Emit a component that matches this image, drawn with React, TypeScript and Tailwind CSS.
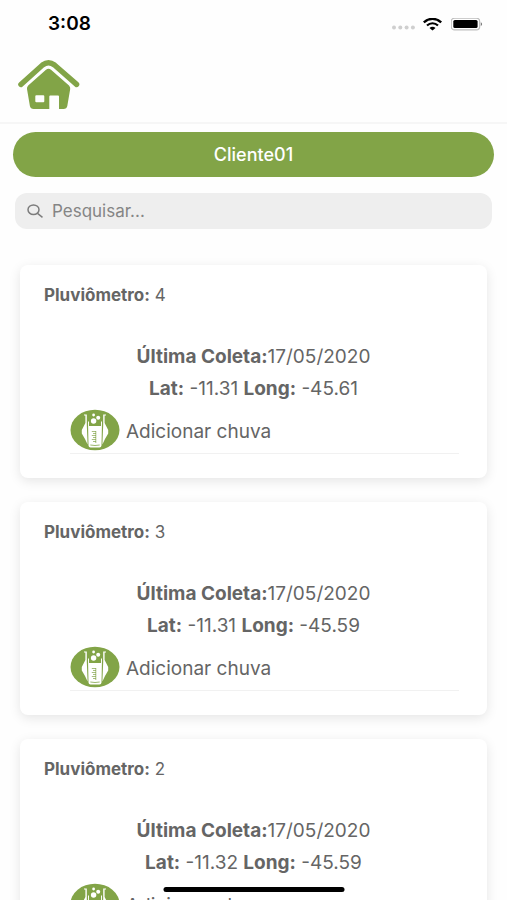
export interface Gauge {
  id: number;
  lastReading: string;
  lat: string;
  long: string;
}

const gauges: Gauge[] = [
  { id: 4, lastReading: '17/05/2020', lat: '-11.31', long: '-45.61' },
  { id: 3, lastReading: '17/05/2020', lat: '-11.31', long: '-45.59' },
  { id: 2, lastReading: '17/05/2020', lat: '-11.32', long: '-45.59' },
];

function StatusBar() {
  return (
    <div className="flex h-12 shrink-0 items-center justify-between pr-6 pl-12">
      <span className="text-[19px] font-semibold text-black">3:08</span>
      <div className="flex items-center gap-2">
        <svg width="23" height="6" viewBox="0 0 23 6" className="mt-2" fill="#cfcfcf">
          <circle cx="2" cy="2.5" r="2" />
          <circle cx="8.3" cy="2.5" r="2" />
          <circle cx="14.6" cy="2.5" r="2" />
          <circle cx="20.9" cy="2.5" r="2" />
        </svg>
        <svg width="20" height="13" viewBox="0 0 20 13" fill="none" stroke="#000">
          <path d="M.8 4.4C6 -.3 13 -.3 18.200 4.400" strokeWidth="2.4" />
          <path d="M4 7.500C7.200 4.500 11.800 4.500 15 7.500" strokeWidth="2.2" />
          <path d="M6.500 10C8.200 8.400 10.800 8.400 12.500 10L9.500 12.400Z" fill="#000" stroke="none" />
        </svg>
        <svg width="32" height="13" viewBox="0 0 32 13">
          <rect x=".2" y=".2" width="28.500" height="11.6" rx="3.4" fill="#fff" stroke="#bdbdbd" strokeWidth="1.2" />
          <rect x="2.3" y="1.9" width="24.300" height="8.2" rx="1.6" fill="#000" />
          <path d="M29.800 4.2C31.500 4.800 31.500 7.400 29.800 8Z" fill="#777" />
        </svg>
      </div>
    </div>
  );
}

function HomeIcon() {
  return (
    <svg width="62" height="50" viewBox="0 0 62 50" fill="#82a447">
      <path
        d="M2.9 24.4L24.500 5Q30.500 .6 36.500 5L58.600 24.400"
        fill="none"
        stroke="#82a447"
        strokeWidth="5.400"
        strokeLinecap="round"
      />
      <path
        fillRule="evenodd"
        d="M28 9.800Q30.500 7.800 33 9.800L51 25.500Q52.500 27 52.200 29L49.300 46Q48.700 49 45.500 49H41V36.500Q41 35.500 40 35.500H32.300Q31.300 35.500 31.300 36.500V49H15.700Q12.500 49 11.900 46L9 29Q8.700 27 10.200 25.500ZM18.300 35.200Q17.300 35.200 17.300 36.200V41.300Q17.300 42.300 18.300 42.300H25.300Q26.300 42.300 26.300 41.300V36.200Q26.300 35.200 25.300 35.200Z"
      />
    </svg>
  );
}

function RainIcon() {
  return (
    <svg width="50" height="42" viewBox="0 0 50 42" className="shrink-0">
      <ellipse cx="25" cy="21" rx="24.500" ry="20.300" fill="#82a447" />
      <g fill="#fff">
        <path d="M14 5.400H16.800V16L17.600 35.500L15 30L11.800 24.500V21L15.400 14V6.500H14Z" />
        <path d="M36 5.400H33.200V16L32.400 35.500L35 30L38.200 24.500V21L34.600 14V6.500H36Z" />
        <path d="M18 12.500H19V17H31V12.500H32L31.500 36.500Q31.400 38.600 29.400 38.600H20.600Q18.600 38.600 18.500 36.500Z" />
        <circle cx="23.600" cy="12" r="2.700" />
        <circle cx="28.200" cy="8.800" r="2" />
        <circle cx="23.600" cy="6" r="1.400" />
      </g>
      <path d="M20.300 36Q25 37 29.700 36" fill="none" stroke="#82a447" strokeWidth=".8" />
      <path
        d="M25.800 22V34M21.800 22.500H26M23 24.500H26M21.800 26.500H26M23 28.500H26M21.800 30.500H26M23 32.500H26"
        fill="none"
        stroke="#82a447"
        strokeWidth=".7"
      />
    </svg>
  );
}

function GaugeCard({ ...gauge }: Gauge) {
  return (
    <div className="rounded-lg bg-white px-6 pt-4 pb-6 shadow-[0_3px_12px_rgba(0,0,0,0.1)]">
      <p className="pt-1 text-[17px] leading-5">
        <b className="font-bold">Pluviômetro:</b> {gauge.id}
      </p>
      <div className="mt-9 text-center text-[19px] leading-8">
        <p>
          <b className="font-bold">Última Coleta:</b>
          {gauge.lastReading}
        </p>
        <p>
          <b className="font-bold">Lat:</b> {gauge.lat} <b className="font-bold">Long:</b> {gauge.long}
        </p>
      </div>
      <div className="mt-1 mr-1 ml-[26px] border-b border-[#f1f1f1]">
        <button className="flex w-full items-center gap-1.5 pb-0.5 text-left text-[19px] leading-6">
          <RainIcon />
          <span className="pt-1">Adicionar chuva</span>
        </button>
      </div>
    </div>
  );
}

export default function App() {
  return (
    <div className="relative flex h-screen flex-col overflow-hidden bg-[#fefefe] font-[Inter,sans-serif] text-[#656565]">
      <StatusBar />
      <header className="shrink-0 border-b-2 border-[#f6f6f6] px-[18px] pt-3 pb-3">
        <a href="#" aria-label="Home" className="inline-block align-top">
          <HomeIcon />
        </a>
      </header>
      <main>
        <div className="px-[13px] pt-2">
          <button className="h-[45px] w-full rounded-full bg-[#82a447] text-lg font-medium text-white">
            Cliente01
          </button>
        </div>
        <div className="px-[15px] pt-4">
          <label className="flex h-9 items-center gap-2 rounded-xl bg-[#eeeeee] px-3">
            <svg width="17" height="14" viewBox="0 0 17 14" fill="none" stroke="#7c7c7c" strokeWidth="1.500">
              <ellipse cx="6.500" cy="5.700" rx="5.500" ry="4.800" />
              <path d="M10.500 9.300L15.500 13.300" />
            </svg>
            <input
              type="search"
              aria-label="Pesquisar"
              placeholder="Pesquisar..."
              className="h-9 min-w-0 flex-1 bg-transparent text-[17px] outline-none placeholder:text-[#858585]"
            />
          </label>
        </div>
        <div className="flex flex-col gap-6 px-5 pt-9">
          {gauges.map((gauge) => (
            <GaugeCard key={gauge.id} {...gauge} />
          ))}
        </div>
      </main>
      <div className="absolute bottom-2 left-1/2 h-[5px] w-[181px] -translate-x-1/2 rounded-full bg-black" />
    </div>
  );
}
